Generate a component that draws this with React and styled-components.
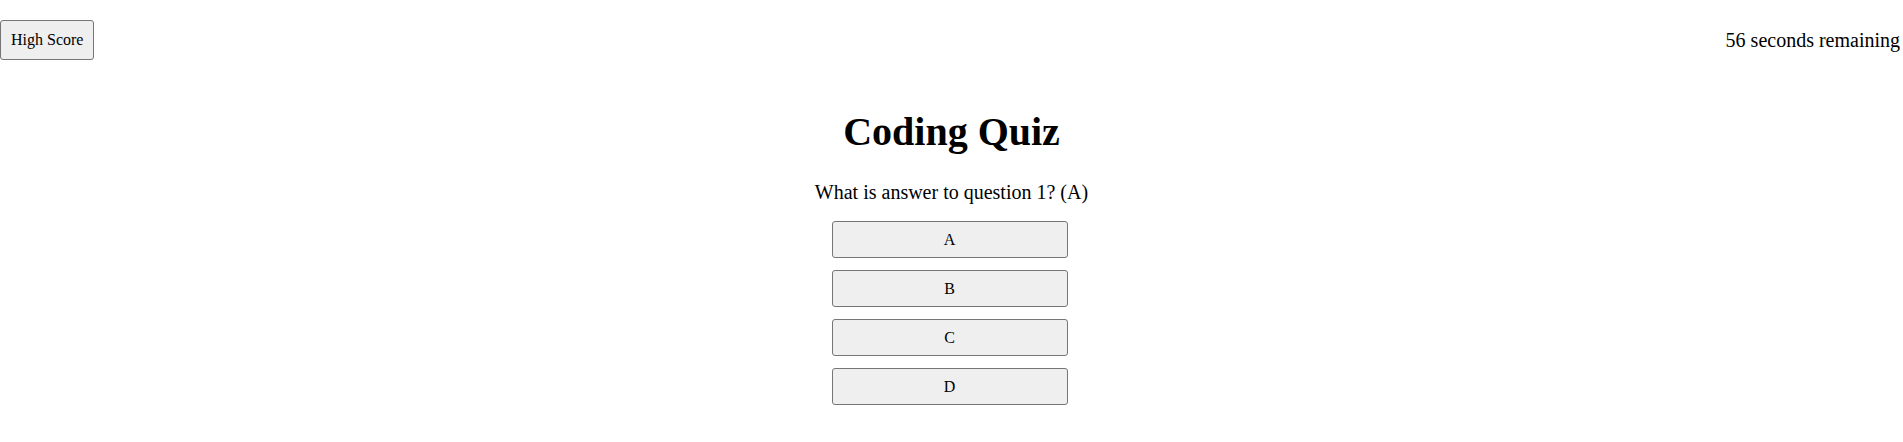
import styled, { createGlobalStyle } from 'styled-components';

const GlobalStyle = createGlobalStyle`
  body {
    margin: 0;
    font-family: "Liberation Serif", "Times New Roman", serif;
    color: #000;
    background: #fff;
  }
`;

const answers = ['A', 'B', 'C', 'D'];

export default function App() {
  return (
    <>
      <GlobalStyle />
      <Header>
        <ScoreButton>High Score</ScoreButton>
        <Timer>56 seconds remaining</Timer>
      </Header>
      <Main>
        <Title>Coding Quiz</Title>
        <Question>What is answer to question 1? (A)</Question>
        <Choices>
          {answers.map((a) => (
            <Choice key={a}>{a}</Choice>
          ))}
        </Choices>
      </Main>
    </>
  );
}

const Header = styled.header`
  display: flex;
  align-items: center;
  justify-content: space-between;
  padding: 20px 3px 20px 0;
`;

const ScoreButton = styled.button`
  font-family: "Liberation Serif", "Times New Roman", serif;
  font-size: 16px;
  padding: 10px 10px;
  background: #efefef;
  border: 1px solid #767676;
  border-radius: 3px;
  color: #000;
  cursor: pointer;
`;

const Timer = styled.span`
  font-size: 20px;
`;

const Main = styled.main`
  display: flex;
  flex-direction: column;
  align-items: center;
`;

const Title = styled.h1`
  font-size: 40px;
  margin: 28px 0 26px;
`;

const Question = styled.p`
  font-size: 20px;
  margin: 0 0 17px;
`;

const Choices = styled.div`
  display: flex;
  flex-direction: column;
  gap: 12px;
  width: 236px;
  margin-right: 4px;
`;

const Choice = styled.button`
  font-family: "Liberation Serif", "Times New Roman", serif;
  font-size: 16px;
  height: 37px;
  background: #efefef;
  border: 1px solid #767676;
  border-radius: 3px;
  color: #000;
  cursor: pointer;
`;
